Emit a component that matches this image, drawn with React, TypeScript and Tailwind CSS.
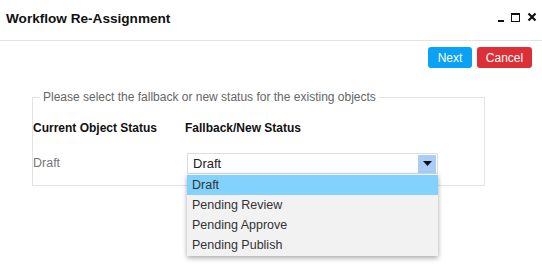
const options = ["Draft", "Pending Review", "Pending Approve", "Pending Publish"];

const App = () => {
  return (
    <div className="h-[276px] w-[542px] overflow-hidden bg-white font-['Liberation_Sans',Arial,sans-serif] text-[#222]">
      {/* header */}
      <div className="flex h-[41px] items-center justify-between border-b border-[#e3e3e3] pl-[6px] pr-[5px]">
        <h1 className="pb-[2px] text-[13.6px] font-bold text-[#111]">Workflow Re-Assignment</h1>
        <div className="flex items-center gap-[7px] pb-[6px]">
          <span className="mt-[8px] h-[2px] w-[6px] bg-[#111]" />
          <span className="h-[9px] w-[9px] border-[1.5px] border-t-[2.5px] border-[#111]" />
          <svg width="10" height="10" viewBox="0 0 10 10">
            <path d="M1.5 1.5 L8.5 8.5 M8.5 1.5 L1.5 8.5" stroke="#111" strokeWidth="2.2" />
          </svg>
        </div>
      </div>

      {/* actions */}
      <div className="flex justify-end gap-[5px] pr-[10px] pt-[6px]">
        <button className="h-[21px] w-[44px] rounded-[3px] bg-[#0aa2f7] text-[12px] text-white">
          Next
        </button>
        <button className="h-[21px] w-[55px] rounded-[3px] bg-[#dc3036] text-[12px] text-white">
          Cancel
        </button>
      </div>

      {/* form */}
      <fieldset className="ml-[32px] mt-[22px] h-[96px] w-[453px] border border-[#e2e2e2] pl-0 pr-[10px]">
        <legend className="ml-[7px] px-[3px] text-[12px] leading-[14px] text-[#666]">
          Please select the fallback or new status for the existing objects
        </legend>
        <div className="mt-[15px] flex text-[12px] font-bold text-[#111]">
          <div className="w-[152px]">Current Object Status</div>
          <div>Fallback/New Status</div>
        </div>
        <div className="mt-[16px] flex items-center">
          <div className="w-[154px] text-[12.5px] text-[#777]">Draft</div>
          <div className="relative">
            <div className="flex h-[21px] w-[251px] items-center justify-between border border-[#ddd] bg-white pl-[5px] pr-[1px]">
              <span className="text-[13px] text-[#222]">Draft</span>
              <span className="flex h-[18px] w-[18px] items-center justify-center bg-[#a9cdf5]">
                <svg width="9" height="5" viewBox="0 0 9 5">
                  <path d="M0 0 H9 L4.5 5 Z" fill="#111" />
                </svg>
              </span>
            </div>
            <ul className="absolute left-0 top-[21px] z-10 w-[251px] bg-[#f2f2f2] py-[1px] shadow-[0_2px_5px_rgba(0,0,0,0.35)]">
              {options.map((o, i) => (
                <li
                  key={o}
                  className={`flex h-[20px] items-center pl-[5px] text-[12.5px] text-[#333] ${
                    i === 0 ? "bg-[#82d2fd]" : ""
                  }`}
                >
                  {o}
                </li>
              ))}
            </ul>
          </div>
        </div>
      </fieldset>
    </div>
  );
};

export default App;
